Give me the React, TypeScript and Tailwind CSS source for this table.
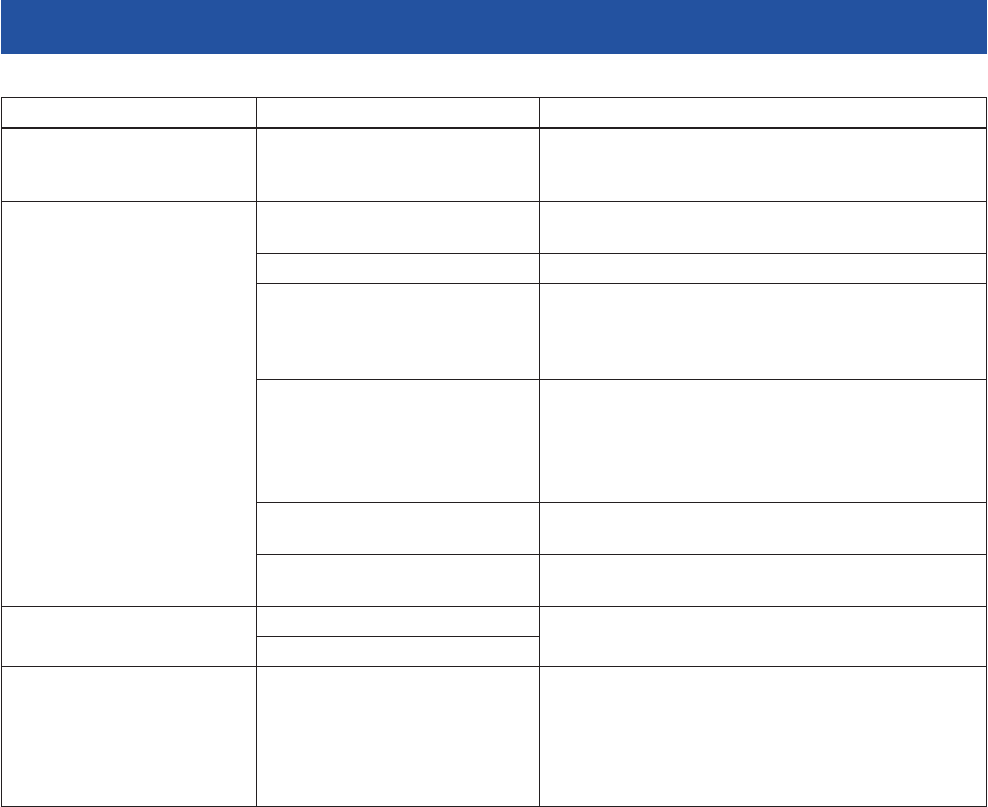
const line = "border border-[#231f20] p-0";

const groupB = ["h-[52px]", "h-[30px]", "h-[96px]", "h-[123px]", "h-[52px]", "h-[52px]"];

export default function App() {
  return (
    <main className="min-h-[807px] w-[988px] bg-white">
      <div className="ml-[1px] h-[54px] w-[986px] bg-[#2352a0]" />

      <table className="ml-[1px] mt-[43px] w-[986px] table-fixed border-collapse">
        <colgroup>
          <col className="w-[255px]" />
          <col className="w-[283px]" />
          <col />
        </colgroup>
        <thead>
          <tr className="h-[30px]">
            <th className={`${line} border-b-2`} />
            <th className={`${line} border-b-2`} />
            <th className={`${line} border-b-2`} />
          </tr>
        </thead>
        <tbody>
          <tr className="h-[74px]">
            <td className={line} />
            <td className={line} />
            <td className={line} />
          </tr>

          {groupB.map((h, i) => (
            <tr key={i} className={h}>
              {i === 0 && <td rowSpan={groupB.length} className={line} />}
              <td className={line} />
              <td className={line} />
            </tr>
          ))}

          <tr className="h-[30px]">
            <td rowSpan={2} className={line} />
            <td className={line} />
            <td rowSpan={2} className={line} />
          </tr>
          <tr className="h-[30px]">
            <td className={line} />
          </tr>

          <tr className="h-[140px]">
            <td className={line} />
            <td className={line} />
            <td className={line} />
          </tr>
        </tbody>
      </table>
    </main>
  );
}
